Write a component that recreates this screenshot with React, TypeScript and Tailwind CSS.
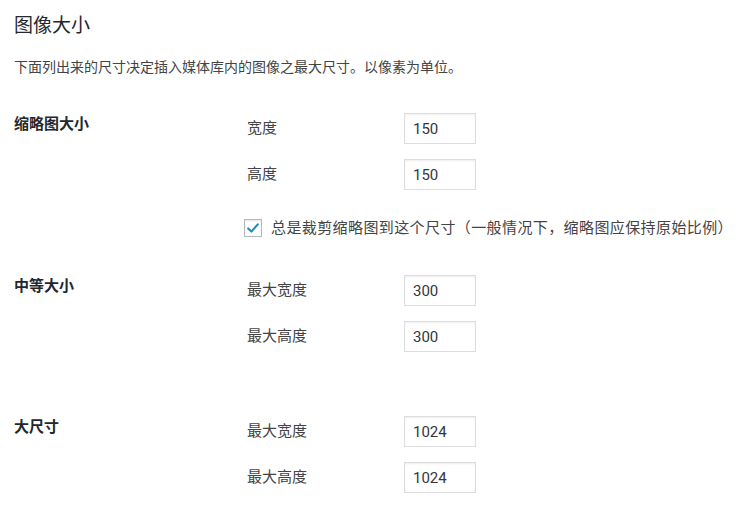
import { type ReactNode } from 'react';

const font = { fontFamily: 'Roboto, "Noto Sans CJK SC", sans-serif' };

interface Field {
  label: string;
  value: string;
}

function SizeInput({ label, value }: Field) {
  return (
    <div className="flex h-[31px] items-center">
      <span className="w-[157px] text-[15px] text-[#444]">{label}</span>
      <input
        type="text"
        defaultValue={value}
        className="h-[31px] w-[72px] border border-[#ddd] bg-white px-[8px] text-[15px] text-[#32373c] shadow-[inset_0_1px_2px_rgba(0,0,0,0.07)] outline-none"
        style={font}
      />
    </div>
  );
}

function Section({
  title,
  fields,
  children,
  className,
}: {
  title: string;
  fields: Field[];
  children?: ReactNode;
  className?: string;
}) {
  return (
    <div className={`flex ${className ?? ''}`}>
      <div className="w-[233px] shrink-0 text-[15px] font-bold leading-[22px] text-[#23282d]">
        {title}
      </div>
      <div className="flex flex-col">
        <div className="flex flex-col gap-[15px]">
          {fields.map((f) => (
            <SizeInput key={f.label} {...f} />
          ))}
        </div>
        {children}
      </div>
    </div>
  );
}

function Checkbox() {
  return (
    <span className="flex h-[18px] w-[18px] items-center justify-center border border-[#b4b9be] bg-white shadow-[inset_0_1px_2px_rgba(0,0,0,0.1)]">
      <svg viewBox="0 0 20 20" className="h-[16px] w-[16px]">
        <path
          d="M4 10.5l4 4 8-9"
          fill="none"
          stroke="#1e8cbe"
          strokeWidth="2.6"
          strokeLinecap="round"
          strokeLinejoin="round"
        />
      </svg>
    </span>
  );
}

export default function App() {
  return (
    <div className="min-h-screen bg-white px-[14px] pt-[13px] text-[#444]" style={font}>
      <h2 className="text-[19px] font-normal leading-[26px] text-[#23282d]">图像大小</h2>
      <p className="mt-[18px] text-[14px] leading-[20px] text-[#444]">
        下面列出来的尺寸决定插入媒体库内的图像之最大尺寸。以像素为单位。
      </p>

      <Section
        className="mt-[36px]"
        title="缩略图大小"
        fields={[
          { label: '宽度', value: '150' },
          { label: '高度', value: '150' },
        ]}
      >
        <label className="ml-[-3px] mt-[26px] flex h-[24px] items-center gap-[9px] text-[15px] text-[#444]">
          <Checkbox />
          <span className="whitespace-nowrap tracking-[0.4px]">
            总是裁剪缩略图到这个尺寸（一般情况下，缩略图应保持原始比例）
          </span>
        </label>
      </Section>

      <Section
        className="mt-[35px]"
        title="中等大小"
        fields={[
          { label: '最大宽度', value: '300' },
          { label: '最大高度', value: '300' },
        ]}
      />

      <Section
        className="mt-[64px]"
        title="大尺寸"
        fields={[
          { label: '最大宽度', value: '1024' },
          { label: '最大高度', value: '1024' },
        ]}
      />
    </div>
  );
}
